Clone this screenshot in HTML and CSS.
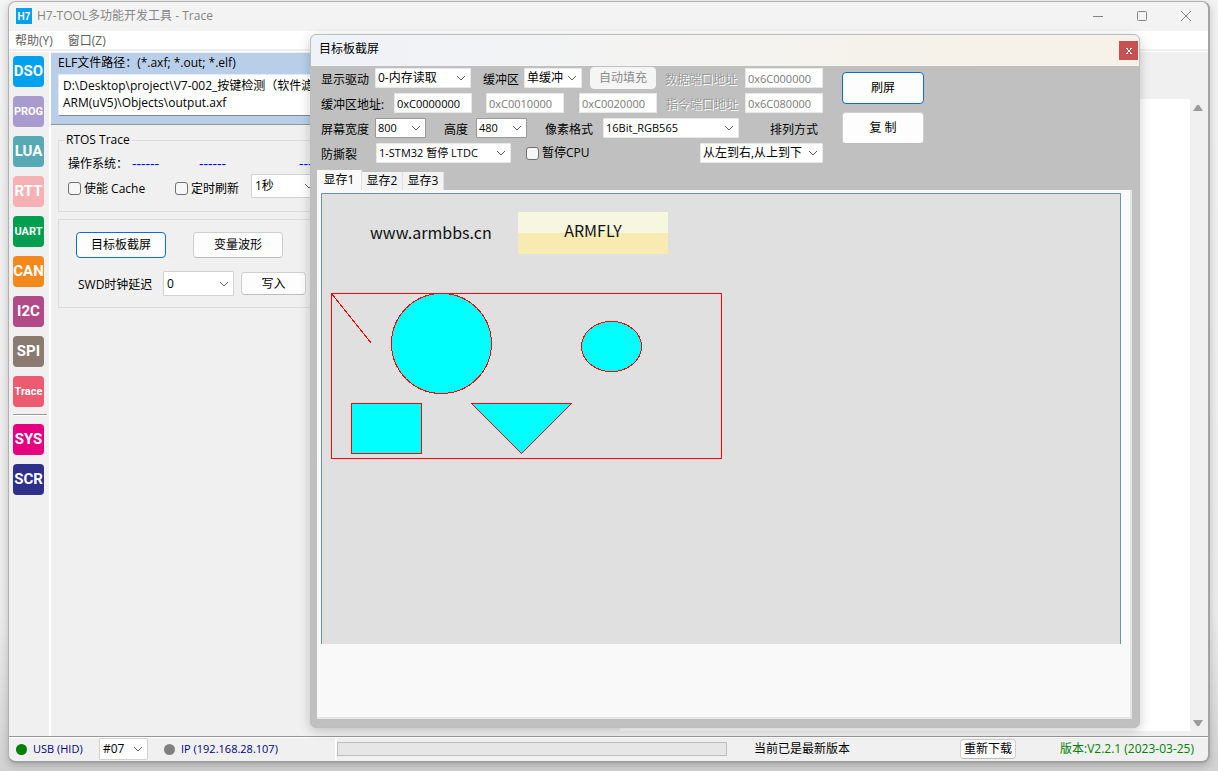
FILE: index.html
```html
<!DOCTYPE html>
<html lang="zh-CN">
<head>
<meta charset="utf-8">
<title>H7-TOOL多功能开发工具 - Trace</title>
<link rel="stylesheet" href="styles.css">
</head>
<body>
<div class="window">
  <header class="titlebar">
    <svg class="logo" width="16" height="16" viewBox="0 0 16 16"><rect width="16" height="16" fill="#00a2ed"/><text x="8" y="12" text-anchor="middle">H7</text></svg>
    <h1 class="title">H7-TOOL多功能开发工具 - Trace</h1>
    <button class="caption" aria-label="最小化"><svg width="12" height="12"><path d="M1 6.500h10"/></svg></button>
    <button class="caption" aria-label="最大化"><svg width="12" height="12"><rect x="1.500" y="1.500" width="9" height="9" rx="1"/></svg></button>
    <button class="caption" aria-label="关闭"><svg width="12" height="12"><path d="M1 1l10 10M11 1L1 11"/></svg></button>
  </header>
  <nav class="menubar"><button>帮助(Y)</button><button>窗口(Z)</button></nav>
  <div class="workspace">
    <nav class="sidebar">
      <button class="tool dso">DSO</button>
      <button class="tool prog four">PROG</button>
      <button class="tool lua">LUA</button>
      <button class="tool rtt">RTT</button>
      <button class="tool uart four">UART</button>
      <button class="tool can">CAN</button>
      <button class="tool i2c">I2C</button>
      <button class="tool spi">SPI</button>
      <button class="tool trace four">Trace</button>
      <hr>
      <button class="tool sys">SYS</button>
      <button class="tool scr">SCR</button>
    </nav>
    <main class="left-pane">
      <section class="elf">
        <label for="elf-path">ELF文件路径：(*.axf; *.out; *.elf)</label>
        <textarea id="elf-path" rows="2">D:\Desktop\project\V7-002_按键检测（软件滤波）\
ARM(uV5)\Objects\output.axf</textarea>
      </section>
      <fieldset class="group rtos">
        <legend>RTOS Trace</legend>
        <div class="os-row"><span class="os-name">操作系统：</span><span class="dash">------</span><span class="dash">------</span><span class="dash">------</span></div>
        <div class="refresh-row">
          <label class="check cache"><input type="checkbox">使能 Cache</label>
          <label class="check timed"><input type="checkbox">定时刷新</label>
          <select class="period" aria-label="刷新周期"><option>1秒</option></select>
        </div>
      </fieldset>
      <section class="group actions">
        <div class="action-row"><button class="btn primary">目标板截屏</button><button class="btn">变量波形</button></div>
        <div class="swd-row"><label for="swd">SWD时钟延迟</label><select id="swd"><option>0</option></select><button class="btn write">写入</button></div>
      </section>
    </main>
    <section class="right-pane">
      <div class="log"></div>
      <div class="scrollbar"><svg width="10" height="8"><path d="M4 1h2l4 6H0z"/></svg><svg width="10" height="8"><path d="M0 1h10L6 7H4z"/></svg></div>
    </section>
  </div>
  <footer class="statusbar">
    <div class="links">
      <span class="dot online"></span><span class="usb">USB (HID)</span>
      <select class="device" aria-label="设备编号"><option>#07</option></select>
      <span class="dot offline"></span><span>IP (192.168.28.107)</span>
    </div>
    <div class="progress"></div>
    <span class="latest">当前已是最新版本</span>
    <button class="btn download">重新下载</button>
    <span class="version">版本:V2.2.1 (2023-03-25)</span>
  </footer>

  <div class="dialog" role="dialog" aria-labelledby="dialog-title">
    <header class="dialog-title"><h2 id="dialog-title">目标板截屏</h2><button class="dialog-close" aria-label="关闭"><svg width="8" height="8"><path d="M2 2l4 4M6 2L2 6M1 1.500h2M5 1.500h2M1 6.500h2M5 6.500h2"/></svg></button></header>
    <div class="settings">
      <div class="fields">
        <div class="row driver-row">
          <label for="driver">显示驱动</label><select id="driver"><option>0-内存读取</option></select>
          <label class="indent" for="buffer">缓冲区</label><select id="buffer"><option>单缓冲</option></select>
          <button class="btn fill" disabled>自动填充</button>
          <label class="off" for="data-port">数据端口地址</label><input id="data-port" value="0x6C000000" disabled>
        </div>
        <div class="row address-row">
          <label for="addr1">缓冲区地址:</label><input id="addr1" value="0xC0000000"><input class="extra" aria-label="缓冲区地址2" value="0xC0010000" disabled><input class="extra" aria-label="缓冲区地址3" value="0xC0020000" disabled>
          <label class="off" for="cmd-port">指令端口地址</label><input id="cmd-port" value="0x6C080000" disabled>
        </div>
        <div class="row size-row">
          <label for="w">屏幕宽度</label><select id="w" class="edged"><option>800</option></select>
          <label class="far" for="h">高度</label><select id="h" class="edged"><option>480</option></select>
          <label class="far" for="pixel">像素格式</label><select id="pixel"><option>16Bit_RGB565</option></select>
          <label class="order" for="order">排列方式</label>
        </div>
        <div class="row tear-row">
          <label for="tear">防撕裂</label><select id="tear"><option>1-STM32 暂停 LTDC</option></select>
          <label class="check"><input type="checkbox">暂停CPU</label>
          <select id="order"><option>从左到右,从上到下</option></select>
        </div>
      </div>
      <div class="commands"><button class="btn primary">刷屏</button><button class="btn">复 制</button></div>
    </div>
    <div class="tabs" role="tablist"><button role="tab" class="active" aria-selected="true">显存1</button><button role="tab">显存2</button><button role="tab">显存3</button></div>
    <div class="panel" role="tabpanel">
      <svg class="screen" width="800" height="451" viewBox="0 0 800 451">
        <rect width="800" height="451" fill="#e0e0e0"/>
        <path d="M.5 451V.5H799.5V451" fill="none" stroke="#6c93a3"/>
        <text x="49" y="46">www.armbbs.cn</text>
        <rect x="197" y="19" width="150" height="21" fill="#f7f7df"/>
        <rect x="197" y="40" width="150" height="21" fill="#f8ebb1"/>
        <text x="272" y="44" text-anchor="middle">ARMFLY</text>
        <g class="shapes" shape-rendering="crispEdges">
          <rect x="10.500" y="100.500" width="390" height="165" fill="none"/>
          <path d="M10.500 100.500l40 50" fill="none"/>
          <circle cx="120.500" cy="150.500" r="50"/>
          <ellipse cx="290.500" cy="153.500" rx="30" ry="25"/>
          <rect x="30.500" y="210.500" width="70" height="50"/>
          <path d="M150.500 210.500h100l-50 50z"/>
        </g>
      </svg>
    </div>
  </div>
</div>
</body>
</html>
```

FILE: styles.css
```css
* { box-sizing: border-box; }

body {
  margin: 0;
  padding: 1px 8px 8px;
  height: 100vh;
  background: linear-gradient(#f3f3f3, #ececec 80%, #d2d2d2);
  font: 12px/16px "Open Sans", "Noto Sans CJK SC", sans-serif;
  color: #000;
}

button, input, select, textarea { font: inherit; color: inherit; margin: 0; }
button { padding: 0; border: 0; background: none; }
h1, h2 { margin: 0; font: inherit; }

.window {
  position: relative;
  display: flex;
  flex-direction: column;
  height: 100%;
  border: 1px solid #b0b0b0;
  border-right: 2px solid #a3a3a3;
  border-bottom: 2px solid #a0a0a0;
  border-radius: 8px;
  background: #f0f0f0;
  box-shadow: 0 3px 8px #0003;
}

/* Title bar and menu */
.titlebar {
  display: flex;
  align-items: center;
  height: 29px;
  padding: 0 0 2px 7px;
  border-radius: 8px 8px 0 0;
  background: #f3f3f3;
  color: #858585;
}
.logo text { font: bold 10px "Liberation Sans", sans-serif; fill: #fff; }
.title { flex: 1; padding-left: 5px; }
.caption { width: 44px; height: 24px; }
.caption svg { display: block; margin: auto; fill: none; stroke: #858585; }
.menubar {
  display: flex;
  gap: 15px;
  height: 20px;
  padding: 1px 6px 0;
  border-bottom: 2px solid #efefef;
  background: #fff;
  color: #606060;
}

/* Work area */
.workspace {
  flex: 1;
  display: flex;
  min-height: 0;
  border-top: 1px solid #fff;
  border-bottom: 1px solid #979797;
}
.sidebar {
  flex: none;
  display: flex;
  flex-direction: column;
  gap: 9px;
  width: 42px;
  padding: 4px 4px;
  border-right: 2px solid #fff;
}
.sidebar hr {
  width: 34px;
  height: 2px;
  margin: -2px 0 -1px;
  border: 0;
  border-top: 1px solid #999;
  border-bottom: 1px solid #fff;
}
.tool {
  flex: none;
  width: 31px;
  height: 31px;
  border-radius: 4px;
  color: #fff;
  font: bold 15px/31px Roboto, "Liberation Sans", sans-serif;
  text-align: center;
  white-space: nowrap;
}
.four { font-size: 11px; }
.dso { background: #00a2ed; }
.prog { background: #a99bcd; }
.lua { background: #56a9b5; }
.rtt { background: #f5b1b3; }
.uart { background: #009e4f; }
.can { background: #f3881c; }
.i2c { background: #b14a87; }
.spi { background: #8a7a70; }
.trace { background: #ec5b70; }
.sys { background: #e6007f; }
.scr { background: #2f2f8c; }

.left-pane { flex: 0 0 569px; padding-top: 1px; }
.elf {
  height: 72px;
  padding: 2px 7px 0;
  border-bottom: 1px solid #8f979f;
  background: #b9cfe9;
}
.elf label { display: block; height: 19px; }
.elf textarea {
  display: block;
  width: 100%;
  height: 42px;
  padding: 2px 4px;
  border: 1px solid #e6ebf2;
  border-bottom-color: #868686;
  border-radius: 2px;
  line-height: 17px;
  resize: none;
  overflow: hidden;
}
.group { margin: 0 7px; padding: 0; border: 1px solid #dcdcdc; }
.rtos { height: 80px; margin-top: 7px; }
.rtos legend { margin-left: 5px; padding: 0 2px; }
.os-row { display: flex; padding: 8px 9px 0; }
.os-name { width: 64px; }
.dash { width: 67px; color: #00f; font-size: 14px; }
.dash:nth-child(3) { width: 100px; }
.refresh-row { display: flex; align-items: center; padding: 2px 9px; }
.check { display: flex; align-items: center; gap: 3px; }
.check input {
  appearance: none;
  width: 13px;
  height: 13px;
  border: 1px solid #707070;
  border-radius: 3px;
  background: #f6f6f6;
}
.refresh-row .check { padding-top: 5px; }
.cache { width: 107px; }
.timed { width: 76px; }
.period { width: 68px; height: 24px; }
.actions { height: 89px; margin-top: 7px; padding: 12px 17px; }
.action-row { display: flex; gap: 27px; }
.action-row .btn { width: 90px; height: 26px; }
.swd-row { display: flex; align-items: center; margin-top: 13px; padding-left: 2px; }
.swd-row label { width: 85px; padding-top: 2px; }
.swd-row select { width: 71px; height: 25px; }
.write { width: 65px; height: 23px; margin-left: 7px; }

.btn {
  border: 1px solid #cfcfcf;
  border-bottom-color: #bdbdbd;
  border-radius: 4px;
  background: #fdfdfd;
}
.btn.primary { border-color: #0b70cd; }
.btn:disabled { border-color: #f4f4f4; background: #f5f5f5; color: #8c8c8c; }

select {
  appearance: none;
  padding: 0 3px;
  border: 1px solid #d2d2d2;
  border-radius: 1px;
  background: #fff url("data:image/svg+xml,%3Csvg xmlns='http://www.w3.org/2000/svg' width='10' height='6'%3E%3Cpath d='M1 1l4 4 4-4' fill='none' stroke='%23606060'/%3E%3C/svg%3E") no-repeat right 4px center;
}

.right-pane { flex: 1; display: flex; padding: 47px 0 5px; }
.log { flex: 1; background: #fff; }
.scrollbar {
  display: flex;
  flex-direction: column;
  justify-content: space-between;
  width: 18px;
  padding: 5px 3px 4px;
  fill: #9b9b9b;
}

/* Status bar */
.statusbar {
  flex: none;
  display: flex;
  align-items: center;
  height: 24px;
  padding: 0 7px 1px 0;
  border-top: 1px solid #fff;
}
.links {
  flex: 0 0 328px;
  display: flex;
  align-items: center;
  height: 100%;
  padding-left: 7px;
  border-right: 2px solid #fff;
  color: #000080;
  font-size: 11px;
}
.dot { width: 11px; height: 11px; margin-right: 6px; border-radius: 50%; }
.online { background: #008000; }
.offline { background: #808080; }
.usb { width: 66px; }
.device { width: 49px; height: 22px; margin-right: 16px; color: #000; font-size: 12px; }
.progress { flex: 0 1 390px; height: 14px; border: 1px solid #bcbcbc; background: #e6e6e6; }
.latest { padding-left: 27px; }
.download { width: 56px; height: 20px; margin: 0 44px 0 auto; line-height: 18px; }
.version { min-width: 141px; color: #008000; }

/* Screen capture dialog */
.dialog {
  position: absolute;
  inset: 32px 68px 33px 301px;
  display: flex;
  flex-direction: column;
  overflow: hidden;
  border: 1px solid #bdbfbd;
  border-radius: 6px;
  background: #c0c0c0;
  box-shadow: 0 3px 12px #0003;
}
.dialog-title {
  flex: none;
  display: flex;
  justify-content: space-between;
  height: 31px;
  padding: 6px 1px 0 8px;
  background: linear-gradient(90deg, #eff2f8, #f3f3f3 35%, #f6f2e9 80%);
}
.dialog-close { width: 19px; height: 19px; background: #c75050; }
.dialog-close svg { display: block; margin: auto; fill: none; stroke: #fff; }
.settings { flex: none; display: flex; gap: 19px; height: 104px; padding: 1px 10px 0; }
.fields { display: flex; flex-direction: column; gap: 3px; }
.row { display: grid; align-items: center; height: 22px; white-space: nowrap; }
.row label { padding-top: 3px; }
.row select, .row input:not([type]) {
  width: 100%;
  height: 20px;
  padding: 0 2px;
  border: 1px solid #e8e8e8;
  font-size: 11px;
}
.row .edged { border-color: #999; }
.row input:not([type]) { background: #fff; }
.row input:disabled { color: #787878; }
.driver-row { grid-template-columns: 54px 96px 53px 58px 74px 89px 78px; }
.address-row { grid-template-columns: 73px 78px 92px 93px 88px 78px; }
.size-row { grid-template-columns: 54px 51px 50px 51px 76px 136px 84px; }
.tear-row { grid-template-columns: 55px 135px 189px 123px; }
.row #driver, .row #buffer, .row #order { font-size: 12px; }
.row input.extra:not([type]) { width: 78px; justify-self: end; }
.indent { padding-left: 12px; }
.far { padding-left: 18px; }
.order { padding-left: 31px; }
.off { padding-left: 9px; color: #9a9a9a; text-shadow: 1px 1px #fff; }
.fill { width: 66px; height: 22px; margin-left: 8px; }
.tear-row .check { padding-top: 0; padding-left: 15px; }
.commands { display: flex; flex-direction: column; gap: 8px; padding-top: 5px; }
.commands .btn { width: 82px; height: 32px; }

.tabs { flex: none; display: flex; align-items: flex-end; height: 20px; padding-left: 6px; }
.tabs button { width: 41px; height: 18px; border-right: 1px solid #e0e0e0; background: #f3f3f3; line-height: 18px; }
.tabs .active { width: 45px; height: 20px; background: #f9f9f9; }
.panel {
  flex: 1;
  min-height: 0;
  margin: 0 7px 8px 6px;
  padding: 3px 4px 4px;
  border: 1px solid #e5e5e5;
  border-width: 0 2px 2px 0;
  background: #f9f9f9;
}
.screen { display: block; max-width: 100%; }
.screen text { font: 16px "Noto Sans CJK SC", sans-serif; fill: #111; }
.shapes { fill: #0ff; stroke: #f00; }
```
